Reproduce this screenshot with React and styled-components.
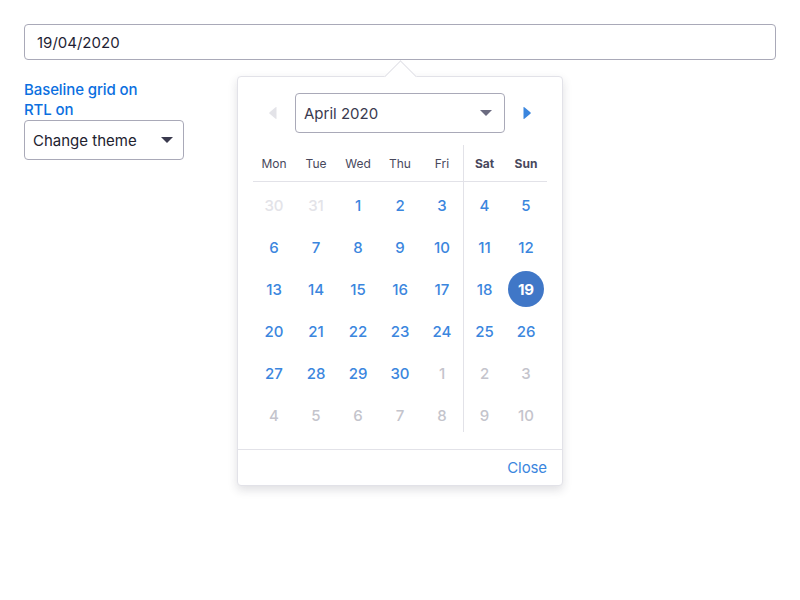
import React from 'react';
import styled, { createGlobalStyle } from 'styled-components';

const GlobalStyle = createGlobalStyle`
  body {
    margin: 0;
    background: #ffffff;
    font-family: Inter, "Noto Sans", sans-serif;
  }
`;

const Page = styled.div`
  position: relative;
  padding: 24px;
  height: 552px;
`;

const DateInput = styled.div`
  box-sizing: border-box;
  height: 36px;
  border: 1px solid #a9a9b8;
  border-radius: 4px;
  padding: 0 12px;
  display: flex;
  align-items: center;
  font-size: 15px;
  color: #1f1f35;
`;

const Controls = styled.div`
  margin-top: 20px;
  display: flex;
  flex-direction: column;
  align-items: flex-start;
`;

const LinkButton = styled.button`
  border: 0;
  background: none;
  padding: 0;
  font: inherit;
  font-size: 15px;
  font-weight: 500;
  line-height: 20px;
  letter-spacing: -0.1px;
  color: #0b6fe0;
  cursor: pointer;
`;

const ThemeSelect = styled.div`
  box-sizing: border-box;
  width: 160px;
  height: 40px;
  border: 1px solid #a9a9b8;
  border-radius: 4px;
  display: flex;
  align-items: center;
  justify-content: space-between;
  padding: 0 10px 0 8px;
  font-size: 15px;
  color: #22222f;
`;

const Caret = styled.span`
  width: 0;
  height: 0;
  border-left: 6px solid transparent;
  border-right: 6px solid transparent;
  border-top: 6px solid ${p => p.color || '#3a3a4e'};
`;

const Popover = styled.div`
  position: absolute;
  left: 237px;
  top: 76px;
  width: 326px;
  box-sizing: border-box;
  background: #fff;
  border: 1px solid #e2e2e8;
  border-radius: 4px;
  box-shadow: 0 4px 10px rgba(40, 40, 60, 0.15);
`;

const Arrow = styled.div`
  position: absolute;
  top: -12px;
  left: 151px;
  width: 22px;
  height: 22px;
  background: #fff;
  border-top: 1px solid #e2e2e8;
  border-left: 1px solid #e2e2e8;
  transform: rotate(45deg);
`;

const Body = styled.div`
  position: relative;
  padding: 16px 15px 13px;
`;

const Nav = styled.div`
  display: flex;
  align-items: center;
  gap: 2px;
  margin-bottom: 12px;
`;

const NavButton = styled.button`
  width: 40px;
  height: 40px;
  border: 0;
  background: none;
  padding: 0;
  display: flex;
  align-items: center;
  justify-content: center;
`;

const MonthSelect = styled.div`
  flex: 1;
  box-sizing: border-box;
  height: 40px;
  border: 1px solid #a9a9b8;
  border-radius: 4px;
  display: flex;
  align-items: center;
  justify-content: space-between;
  padding: 0 12px 0 8px;
  font-size: 15px;
  color: #3a3a4f;
`;

const Grid = styled.div`
  display: grid;
  grid-template-columns: repeat(7, 42px);
`;

const HeadCell = styled.div`
  height: 36px;
  display: flex;
  align-items: center;
  justify-content: center;
  font-size: 12px;
  font-weight: ${p => (p.weekend ? 700 : 400)};
  color: #48485c;
  border-bottom: 1px solid #e2e2e8;
  border-left: ${p => (p.split ? '1px solid #e2e2e8' : '0')};
`;

const DayCell = styled.div`
  height: ${p => (p.last ? '35px' : '42px')};
  display: flex;
  align-items: ${p => (p.last ? 'flex-start' : 'center')};
  justify-content: center;
  border-left: ${p => (p.split ? '1px solid #e2e2e8' : '0')};
  padding-top: ${p => (p.first ? '2px' : p.last ? '3px' : '0')};
  margin-bottom: ${p => (p.last ? '4px' : '0')};
`;

const dayColor = { prev: '#e3e3e8', next: '#c4c4cc', cur: '#3b86de' };

const Day = styled.span`
  width: 36px;
  height: 36px;
  border-radius: 50%;
  display: flex;
  align-items: center;
  justify-content: center;
  font-size: 15px;
  font-weight: ${p => (p.selected ? 700 : 500)};
  color: ${p => (p.selected ? '#fff' : dayColor[p.kind])};
  background: ${p => (p.selected ? '#4077c7' : 'transparent')};
`;

const Footer = styled.div`
  border-top: 1px solid #e2e2e8;
  height: 35px;
  display: flex;
  align-items: center;
  justify-content: flex-end;
  padding: 0 15px;
`;

const CloseButton = styled(LinkButton)`
  color: #3b86de;
  font-weight: 400;
`;

const Tri = ({ dir, color }) => (
  <svg width="10" height="14" viewBox="0 0 10 14">
    {dir === 'left' ? (
      <path d="M8.5 1.5 L8.5 12.5 Q8.5 13.5 7.6 12.8 L1.6 7.8 Q0.8 7 1.6 6.2 L7.6 1.2 Q8.5 0.5 8.5 1.5Z" fill={color} />
    ) : (
      <path d="M1.5 1.5 L1.5 12.5 Q1.5 13.5 2.4 12.8 L8.4 7.8 Q9.2 7 8.4 6.2 L2.4 1.2 Q1.5 0.5 1.5 1.5Z" fill={color} />
    )}
  </svg>
);

const heads = ['Mon', 'Tue', 'Wed', 'Thu', 'Fri', 'Sat', 'Sun'];

const buildDays = () => {
  const days = [{ n: 30, kind: 'prev' }, { n: 31, kind: 'prev' }];
  for (let i = 1; i <= 30; i++) days.push({ n: i, kind: 'cur' });
  for (let i = 1; i <= 10; i++) days.push({ n: i, kind: 'next' });
  return days;
};

export default function App() {
  const days = buildDays();
  return (
    <>
      <GlobalStyle />
      <Page>
        <DateInput>19/04/2020</DateInput>
        <Controls>
          <LinkButton>Baseline grid on</LinkButton>
          <LinkButton>RTL on</LinkButton>
          <ThemeSelect>
            Change theme
            <Caret />
          </ThemeSelect>
        </Controls>

        <Popover>
          <Arrow />
          <Body>
            <Nav>
              <NavButton>
                <Tri dir="left" color="#e3e3e8" />
              </NavButton>
              <MonthSelect>
                April 2020
                <Caret color="#6b6b80" />
              </MonthSelect>
              <NavButton>
                <Tri dir="right" color="#3b86de" />
              </NavButton>
            </Nav>
            <Grid>
              {heads.map((h, i) => (
                <HeadCell key={h} weekend={i > 4} split={i === 5}>
                  {h}
                </HeadCell>
              ))}
              {days.map((d, i) => (
                <DayCell key={i} split={i % 7 === 5} first={i < 7} last={i >= 35}>
                  <Day kind={d.kind} selected={d.kind === 'cur' && d.n === 19}>
                    {d.n}
                  </Day>
                </DayCell>
              ))}
            </Grid>
          </Body>
          <Footer>
            <CloseButton>Close</CloseButton>
          </Footer>
        </Popover>
      </Page>
    </>
  );
}
